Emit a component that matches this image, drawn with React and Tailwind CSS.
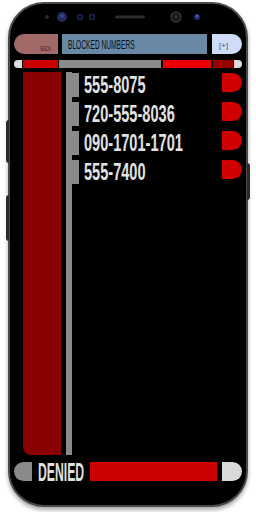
const numbers = ["555-8075", "720-555-8036", "090-1701-1701", "555-7400"];

const font = { fontFamily: '"Liberation Sans", Arial, sans-serif' };

function Bezel() {
  return (
    <svg width="236" height="30" viewBox="0 0 236 30" className="shrink-0">
      <circle cx="33" cy="13" r="2" fill="#2a2a2a" />
      <circle cx="48" cy="13" r="5" fill="#232a5c" />
      <circle cx="48" cy="12" r="2" fill="#3a4488" />
      <circle cx="66" cy="13" r="2.5" fill="none" stroke="#1e2550" strokeWidth="1.5" />
      <circle cx="78" cy="13" r="2.5" fill="none" stroke="#1e2550" strokeWidth="1.5" />
      <rect x="101" y="11.5" width="30" height="3" rx="1.5" fill="#2e2e2e" />
      <circle cx="162" cy="13" r="5" fill="#1a1a1a" stroke="#333" strokeWidth="1.5" />
      <circle cx="162" cy="13" r="1.5" fill="#333" />
      <circle cx="183" cy="13" r="3" fill="#1c2f6a" />
      <circle cx="183" cy="12" r="1.2" fill="#4a6ad0" />
    </svg>
  );
}

export default function App() {
  return (
    <div className="w-[256px] h-[512px] bg-white relative overflow-hidden" style={font}>
      {/* side buttons */}
      <div className="absolute left-[6px] top-[120px] w-[3px] h-[43px] bg-[#2a2a2a] rounded-l-sm" />
      <div className="absolute left-[6px] top-[195px] w-[3px] h-[46px] bg-[#2a2a2a] rounded-l-sm" />
      <div className="absolute left-[247px] top-[163px] w-[3px] h-[37px] bg-[#2a2a2a] rounded-r-sm" />

      <div className="ml-[8px] mt-[2px] w-[240px] h-[505px] rounded-[36px] bg-black border-2 border-[#4a4a4a] shadow-[0_3px_4px_rgba(0,0,0,0.35)] flex flex-col px-[4px]">
        <Bezel />

        {/* header */}
        <div className="flex h-[20px] shrink-0">
          <div className="w-[44px] shrink-0 rounded-l-full bg-[#a26969] flex items-end justify-end pr-[7px] pb-[2px]">
            <span className="inline-block origin-right scale-x-[0.55] text-[7px] leading-[7px] text-[#3a1a1a]">BACK</span>
          </div>
          <div className="ml-[4px] w-[145px] shrink-0 bg-[#6888a4] flex items-center pl-[6px] pt-[2px]">
            <span className="inline-block origin-left scale-x-[0.53] whitespace-nowrap text-[12.5px] leading-[13px] text-[#0c0c14]">
              BLOCKED NUMBERS
            </span>
          </div>
          <div className="ml-[5px] flex-1 min-w-0 rounded-r-full bg-[#cedcf8] flex items-center pl-[7px] pt-[3px]">
            <span className="text-[8px] leading-[8px] text-[#555]">[+]</span>
          </div>
        </div>

        {/* segmented bar */}
        <div className="flex h-[8px] mt-[6px] shrink-0">
          <div className="w-[8px] shrink-0 rounded-l-full bg-[#dcdcdc]" />
          <div className="ml-[1px] w-[35px] shrink-0 bg-[#cc0000]" />
          <div className="ml-[1px] flex-1 min-w-0 bg-[#8a8a8a]" />
          <div className="ml-[2px] w-[48px] shrink-0 bg-[#ec0000]" />
          <div className="ml-[2px] w-[20px] shrink-0 bg-[#990000]" />
          <div className="ml-[1px] w-[8px] shrink-0 rounded-r-full bg-[#dcdcdc]" />
        </div>

        {/* content */}
        <div className="flex h-[383px] mt-[4px] shrink-0 pl-[9px]">
          <div className="w-[38px] shrink-0 bg-[#8b0000] rounded-bl-[8px]" />
          <div className="ml-[5px] flex-1 min-w-0 border-l-[6px] border-[#8a8a8a] flex flex-col gap-[5px] pt-[1px]">
            {numbers.map((n) => (
              <div key={n} className="flex items-start h-[24px]">
                <div className="w-[7px] h-[24px] shrink-0 bg-[#8a8a8a]" />
                <div className="ml-[5px] flex-1 min-w-0">
                  <span className="inline-block origin-left scale-x-[0.62] whitespace-nowrap font-bold text-[23.5px] leading-[24px] text-[#e2e2e2]">
                    {n}
                  </span>
                </div>
                <div className="w-[20px] h-[19px] shrink-0 rounded-r-full bg-[#d00000]" />
              </div>
            ))}
          </div>
        </div>

        {/* footer */}
        <div className="flex h-[19px] mt-[7px] shrink-0 items-stretch">
          <div className="w-[18px] shrink-0 rounded-l-full bg-[#8a8a8a]" />
          <div className="w-[58px] shrink-0 pl-[6px] flex items-center">
            <span className="inline-block origin-left scale-x-[0.47] -mr-[50px] whitespace-nowrap font-bold text-[26px] leading-[19px] text-[#e0e0e0] pt-[1px]">
              DENIED
            </span>
          </div>
          <div className="w-[127px] shrink-0 bg-[#cc0000] relative" />
          <div className="ml-[5px] flex-1 min-w-0 rounded-r-full bg-[#d9d9d9]" />
        </div>
      </div>
    </div>
  );
}
